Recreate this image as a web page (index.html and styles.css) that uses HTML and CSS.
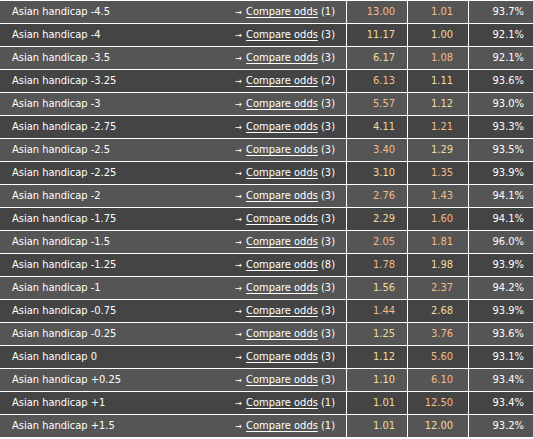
FILE: index.html
```html
<!DOCTYPE html>
<html>
<head>
<meta charset="utf-8">
<link rel="stylesheet" href="styles.css">
</head>
<body>
<div class="odds">
<div class="row l"><div class="c main"><span class="name">Asian handicap -4.5</span><span class="cmp"><span class="arr">&#8594;</span><a href="#">Compare odds</a> (1)</span></div><div class="c o p">13.00</div><div class="c o2 p">1.01</div><div class="c pay">93.7%</div></div>
<div class="row d"><div class="c main"><span class="name">Asian handicap -4</span><span class="cmp"><span class="arr">&#8594;</span><a href="#">Compare odds</a> (3)</span></div><div class="c o y">11.17</div><div class="c o2 y">1.00</div><div class="c pay">92.1%</div></div>
<div class="row l"><div class="c main"><span class="name">Asian handicap -3.5</span><span class="cmp"><span class="arr">&#8594;</span><a href="#">Compare odds</a> (3)</span></div><div class="c o y">6.17</div><div class="c o2 p">1.08</div><div class="c pay">92.1%</div></div>
<div class="row d"><div class="c main"><span class="name">Asian handicap -3.25</span><span class="cmp"><span class="arr">&#8594;</span><a href="#">Compare odds</a> (2)</span></div><div class="c o p">6.13</div><div class="c o2 y">1.11</div><div class="c pay">93.6%</div></div>
<div class="row l"><div class="c main"><span class="name">Asian handicap -3</span><span class="cmp"><span class="arr">&#8594;</span><a href="#">Compare odds</a> (3)</span></div><div class="c o p">5.57</div><div class="c o2 y">1.12</div><div class="c pay">93.0%</div></div>
<div class="row d"><div class="c main"><span class="name">Asian handicap -2.75</span><span class="cmp"><span class="arr">&#8594;</span><a href="#">Compare odds</a> (3)</span></div><div class="c o y">4.11</div><div class="c o2 p">1.21</div><div class="c pay">93.3%</div></div>
<div class="row l"><div class="c main"><span class="name">Asian handicap -2.5</span><span class="cmp"><span class="arr">&#8594;</span><a href="#">Compare odds</a> (3)</span></div><div class="c o p">3.40</div><div class="c o2 y">1.29</div><div class="c pay">93.5%</div></div>
<div class="row d"><div class="c main"><span class="name">Asian handicap -2.25</span><span class="cmp"><span class="arr">&#8594;</span><a href="#">Compare odds</a> (3)</span></div><div class="c o y">3.10</div><div class="c o2 p">1.35</div><div class="c pay">93.9%</div></div>
<div class="row l"><div class="c main"><span class="name">Asian handicap -2</span><span class="cmp"><span class="arr">&#8594;</span><a href="#">Compare odds</a> (3)</span></div><div class="c o p">2.76</div><div class="c o2 p">1.43</div><div class="c pay">94.1%</div></div>
<div class="row d"><div class="c main"><span class="name">Asian handicap -1.75</span><span class="cmp"><span class="arr">&#8594;</span><a href="#">Compare odds</a> (3)</span></div><div class="c o y">2.29</div><div class="c o2 p">1.60</div><div class="c pay">94.1%</div></div>
<div class="row l"><div class="c main"><span class="name">Asian handicap -1.5</span><span class="cmp"><span class="arr">&#8594;</span><a href="#">Compare odds</a> (3)</span></div><div class="c o p">2.05</div><div class="c o2 p">1.81</div><div class="c pay">96.0%</div></div>
<div class="row d"><div class="c main"><span class="name">Asian handicap -1.25</span><span class="cmp"><span class="arr">&#8594;</span><a href="#">Compare odds</a> (8)</span></div><div class="c o p">1.78</div><div class="c o2 y">1.98</div><div class="c pay">93.9%</div></div>
<div class="row l"><div class="c main"><span class="name">Asian handicap -1</span><span class="cmp"><span class="arr">&#8594;</span><a href="#">Compare odds</a> (3)</span></div><div class="c o y">1.56</div><div class="c o2 p">2.37</div><div class="c pay">94.2%</div></div>
<div class="row d"><div class="c main"><span class="name">Asian handicap -0.75</span><span class="cmp"><span class="arr">&#8594;</span><a href="#">Compare odds</a> (3)</span></div><div class="c o p">1.44</div><div class="c o2 y">2.68</div><div class="c pay">93.9%</div></div>
<div class="row l"><div class="c main"><span class="name">Asian handicap -0.25</span><span class="cmp"><span class="arr">&#8594;</span><a href="#">Compare odds</a> (3)</span></div><div class="c o y">1.25</div><div class="c o2 p">3.76</div><div class="c pay">93.6%</div></div>
<div class="row d"><div class="c main"><span class="name">Asian handicap 0</span><span class="cmp"><span class="arr">&#8594;</span><a href="#">Compare odds</a> (3)</span></div><div class="c o y">1.12</div><div class="c o2 p">5.60</div><div class="c pay">93.1%</div></div>
<div class="row l"><div class="c main"><span class="name">Asian handicap +0.25</span><span class="cmp"><span class="arr">&#8594;</span><a href="#">Compare odds</a> (3)</span></div><div class="c o y">1.10</div><div class="c o2 p">6.10</div><div class="c pay">93.4%</div></div>
<div class="row d"><div class="c main"><span class="name">Asian handicap +1</span><span class="cmp"><span class="arr">&#8594;</span><a href="#">Compare odds</a> (1)</span></div><div class="c o y">1.01</div><div class="c o2 p">12.50</div><div class="c pay">93.4%</div></div>
<div class="row l"><div class="c main"><span class="name">Asian handicap +1.5</span><span class="cmp"><span class="arr">&#8594;</span><a href="#">Compare odds</a> (1)</span></div><div class="c o y">1.01</div><div class="c o2 y">12.00</div><div class="c pay">93.2%</div></div>
</div>
</body>
</html>
```
FILE: styles.css
```css
html, body {
  margin: 0;
  padding: 0;
  background: #ffffff;
}
.odds {
  width: 533px;
  border-top: 1px solid #ffffff;
  font-family: "DejaVu Sans Condensed", "DejaVu Sans", sans-serif;
  font-size: 11px;
  color: #ffffff;
}
.row {
  display: grid;
  grid-template-columns: 347px 61px 61px 64px;
  height: 22px;
  border-bottom: 1px solid #ffffff;
}
.row.l { background: #555555; }
.row.d { background: #444444; }
.c {
  box-sizing: border-box;
  height: 22px;
  line-height: 22px;
  white-space: nowrap;
}
.main {
  display: flex;
  justify-content: space-between;
  padding: 0 11px 0 12px;
  border-right: 1px solid #ffffff;
}
.cmp a {
  color: #ffffff;
  text-decoration: underline;
  text-underline-offset: 2px;
}
.arr {
  font-size: 9px;
  margin-right: 4px;
}
.o {
  text-align: right;
  padding-right: 12px;
  border-right: 1px solid #ffffff;
}
.o2 {
  text-align: right;
  padding-right: 15px;
  border-right: 1px solid #ffffff;
}
.p { color: #f2bb88; }
.y { color: #eedc9e; }
.pay {
  text-align: right;
  padding-right: 9px;
}
```
